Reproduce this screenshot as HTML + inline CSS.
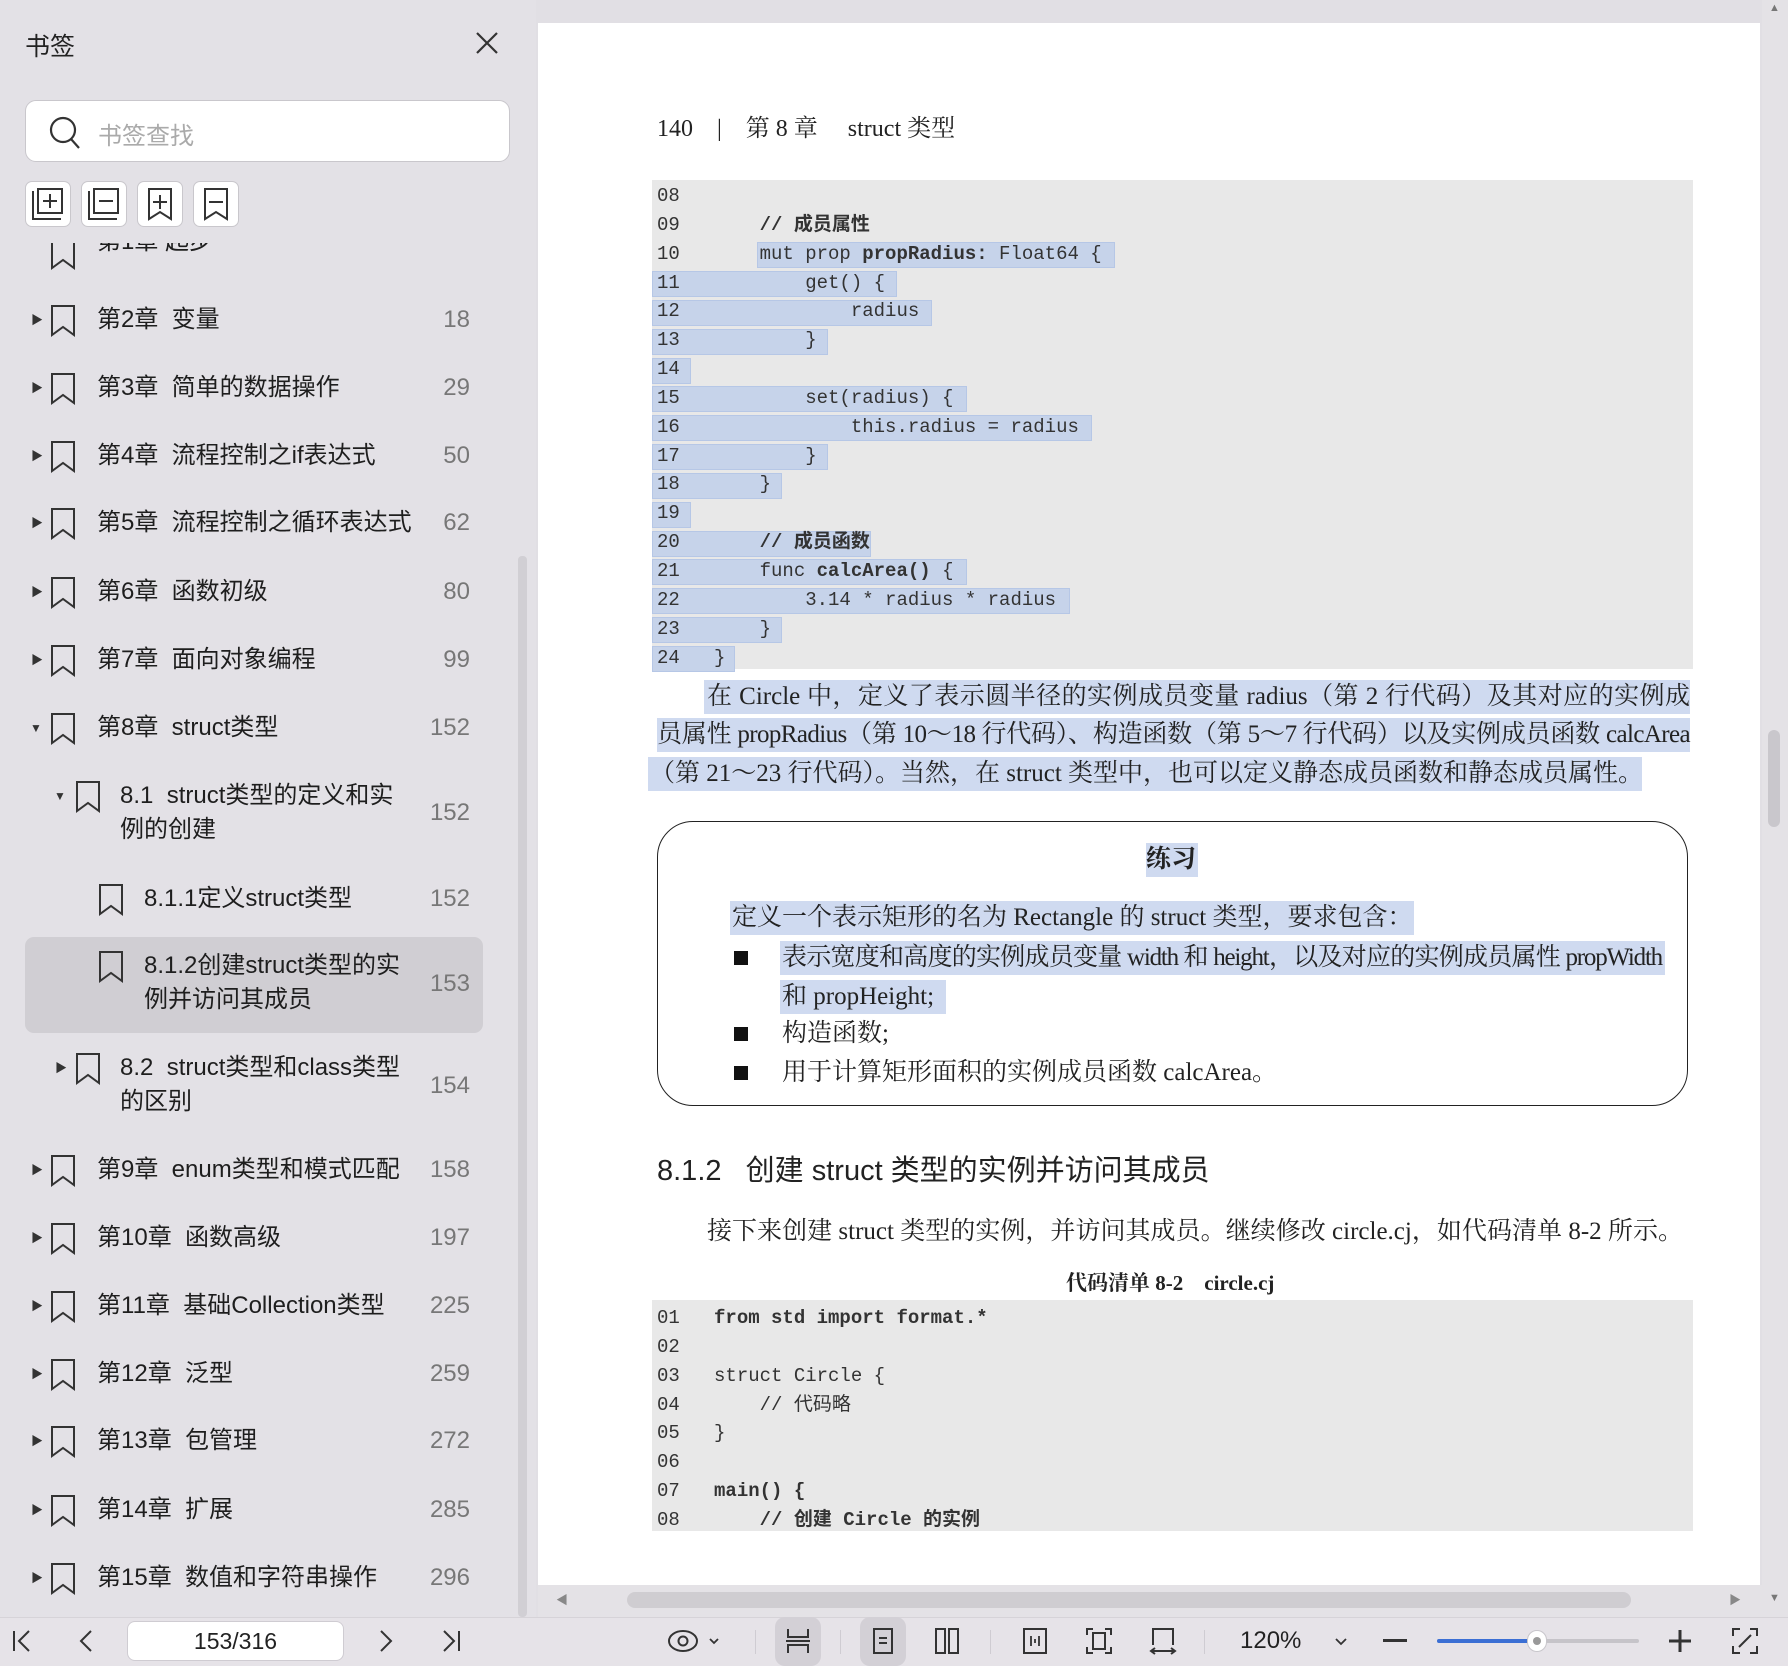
<!DOCTYPE html>
<html><head><meta charset="utf-8"><style>
*{margin:0;padding:0;box-sizing:border-box}
body{width:1788px;height:1666px;position:relative;overflow:hidden;background:#e1dfe4;font-family:"Liberation Sans","Noto Sans CJK SC",sans-serif;color:#222}
.a{position:absolute}
.side{left:0;top:0;width:536px;height:1617px;background:#e3e1e6}
.rowt{position:absolute;font-size:24px;color:#1e1e1e;line-height:34px;white-space:nowrap}
.num{position:absolute;right:1318px;font-size:24px;color:#777;line-height:32px;text-align:right}
.tri{position:absolute;font-size:12px;color:#333;line-height:32px}
.bm{position:absolute;width:26px;height:34px}
.page{left:538px;top:23px;width:1222px;height:1562px;background:#fff}
.serif{font-family:"Liberation Serif","Noto Serif CJK SC",serif}
.code{background:#e8e8e8}
.cl{position:absolute;font-family:"Liberation Mono","Noto Sans CJK SC",monospace;font-size:19px;line-height:28px;white-space:pre;color:#333}
.hl{position:absolute;background:#c6d3ea;border:1px solid #b6c7e6;height:26px}
.pl{position:absolute;font-size:25px;line-height:34px;white-space:nowrap;text-align:justify;text-align-last:justify;color:#222}
.ph{position:absolute;background:#cfdaf0;height:34px}
.tb{left:0;top:1617px;width:1788px;height:49px;background:#e6e3e8;border-top:1px solid #d6d3d8}
.ic{position:absolute;top:1627px}
.sep{position:absolute;top:1630px;width:1px;height:24px;background:#cfccd2}
</style></head><body>

<!-- sidebar -->
<div class="a side"></div>
<div class="a" style="left:0;top:243px;width:536px;height:1374px;overflow:hidden">
  <div class="a" style="top:-6px;left:0;width:536px;height:40px">
    <svg class="bm" style="left:50px;top:0" viewBox="0 0 26 34"><path d="M2 2H24V31L13 23L2 31Z" fill="none" stroke="#333" stroke-width="2"/></svg>
    <div class="rowt" style="left:97px;top:-12px">第1章 起步</div>
  </div>
</div>
<div class="a" style="left:0;top:0;width:536px;height:243px;background:#e3e1e6"></div>
<div class="a" style="left:25px;top:27px;font-size:25px;color:#222">书签</div>
<svg class="a" style="left:474px;top:30px" width="26" height="26" viewBox="0 0 26 26"><path d="M3 3L23 23M23 3L3 23" stroke="#333" stroke-width="2.2"/></svg>
<div class="a" style="left:25px;top:100px;width:485px;height:62px;background:#fff;border:1px solid #c9c7cc;border-radius:11px"></div>
<svg class="a" style="left:48px;top:115px" width="34" height="36" viewBox="0 0 34 36"><circle cx="15" cy="15" r="12" fill="none" stroke="#333" stroke-width="2.2"/><path d="M23 24L31 33" stroke="#333" stroke-width="2.2"/></svg>
<div class="a" style="left:98px;top:116px;font-size:24px;color:#aaa">书签查找</div>
<div class="a" style="left:25px;top:181px;width:46px;height:46px;background:#fff;border:1px solid #c9c7cc;border-radius:7px"></div>
<div class="a" style="left:81px;top:181px;width:46px;height:46px;background:#fff;border:1px solid #c9c7cc;border-radius:7px"></div>
<div class="a" style="left:137px;top:181px;width:46px;height:46px;background:#fff;border:1px solid #c9c7cc;border-radius:7px"></div>
<div class="a" style="left:193px;top:181px;width:46px;height:46px;background:#fff;border:1px solid #c9c7cc;border-radius:7px"></div>
<svg class="a" style="left:25px;top:181px" width="46" height="46" viewBox="0 0 46 46"><path d="M8 10V38H36" fill="none" stroke="#333" stroke-width="2"/><rect x="13" y="8" width="24" height="24" fill="none" stroke="#333" stroke-width="2"/><path d="M25 13V27M18 20H32" stroke="#333" stroke-width="2"/></svg>
<svg class="a" style="left:81px;top:181px" width="46" height="46" viewBox="0 0 46 46"><path d="M8 10V38H36" fill="none" stroke="#333" stroke-width="2"/><rect x="13" y="8" width="24" height="24" fill="none" stroke="#333" stroke-width="2"/><path d="M18 20H32" stroke="#333" stroke-width="2"/></svg>
<svg class="a" style="left:137px;top:181px" width="46" height="46" viewBox="0 0 46 46"><path d="M12 8H34V38L23 31L12 38Z" fill="none" stroke="#333" stroke-width="2"/><path d="M23 14V28M16 21H30" stroke="#333" stroke-width="2"/></svg>
<svg class="a" style="left:193px;top:181px" width="46" height="46" viewBox="0 0 46 46"><path d="M12 8H34V38L23 31L12 38Z" fill="none" stroke="#333" stroke-width="2"/><path d="M16 21H30" stroke="#333" stroke-width="2"/></svg>

<div class="a" style="left:25px;top:937px;width:458px;height:96px;background:#d0ced3;border-radius:9px"></div>

<div class="tri" style="left:31px;top:304px">▶</div><svg class="bm" style="left:50px;top:304px" viewBox="0 0 26 34"><path d="M2 2H24V31L13 23L2 31Z" fill="none" stroke="#333" stroke-width="2"/></svg><div class="rowt" style="left:97px;top:303px">第2章&nbsp; 变量</div><div class="num" style="top:304px">18</div>
<div class="tri" style="left:31px;top:372px">▶</div><svg class="bm" style="left:50px;top:372px" viewBox="0 0 26 34"><path d="M2 2H24V31L13 23L2 31Z" fill="none" stroke="#333" stroke-width="2"/></svg><div class="rowt" style="left:97px;top:371px">第3章&nbsp; 简单的数据操作</div><div class="num" style="top:372px">29</div>
<div class="tri" style="left:31px;top:440px">▶</div><svg class="bm" style="left:50px;top:440px" viewBox="0 0 26 34"><path d="M2 2H24V31L13 23L2 31Z" fill="none" stroke="#333" stroke-width="2"/></svg><div class="rowt" style="left:97px;top:439px">第4章&nbsp; 流程控制之if表达式</div><div class="num" style="top:440px">50</div>
<div class="tri" style="left:31px;top:507px">▶</div><svg class="bm" style="left:50px;top:507px" viewBox="0 0 26 34"><path d="M2 2H24V31L13 23L2 31Z" fill="none" stroke="#333" stroke-width="2"/></svg><div class="rowt" style="left:97px;top:506px">第5章&nbsp; 流程控制之循环表达式</div><div class="num" style="top:507px">62</div>
<div class="tri" style="left:31px;top:576px">▶</div><svg class="bm" style="left:50px;top:576px" viewBox="0 0 26 34"><path d="M2 2H24V31L13 23L2 31Z" fill="none" stroke="#333" stroke-width="2"/></svg><div class="rowt" style="left:97px;top:575px">第6章&nbsp; 函数初级</div><div class="num" style="top:576px">80</div>
<div class="tri" style="left:31px;top:644px">▶</div><svg class="bm" style="left:50px;top:644px" viewBox="0 0 26 34"><path d="M2 2H24V31L13 23L2 31Z" fill="none" stroke="#333" stroke-width="2"/></svg><div class="rowt" style="left:97px;top:643px">第7章&nbsp; 面向对象编程</div><div class="num" style="top:644px">99</div>
<div class="tri" style="left:30px;top:712px">▼</div><svg class="bm" style="left:50px;top:712px" viewBox="0 0 26 34"><path d="M2 2H24V31L13 23L2 31Z" fill="none" stroke="#333" stroke-width="2"/></svg><div class="rowt" style="left:97px;top:711px">第8章&nbsp; struct类型</div><div class="num" style="top:712px">152</div>
<div class="tri" style="left:54px;top:780px">▼</div><svg class="bm" style="left:75px;top:780px" viewBox="0 0 26 34"><path d="M2 2H24V31L13 23L2 31Z" fill="none" stroke="#333" stroke-width="2"/></svg><div class="rowt" style="left:120px;top:779px">8.1&nbsp; struct类型的定义和实<br>例的创建</div><div class="num" style="top:797px">152</div>
<svg class="bm" style="left:98px;top:883px" viewBox="0 0 26 34"><path d="M2 2H24V31L13 23L2 31Z" fill="none" stroke="#333" stroke-width="2"/></svg><div class="rowt" style="left:144px;top:882px">8.1.1定义struct类型</div><div class="num" style="top:883px">152</div>
<svg class="bm" style="left:98px;top:950px" viewBox="0 0 26 34"><path d="M2 2H24V31L13 23L2 31Z" fill="none" stroke="#333" stroke-width="2"/></svg><div class="rowt" style="left:144px;top:949px">8.1.2创建struct类型的实<br>例并访问其成员</div><div class="num" style="top:968px">153</div>
<div class="tri" style="left:55px;top:1052px">▶</div><svg class="bm" style="left:75px;top:1052px" viewBox="0 0 26 34"><path d="M2 2H24V31L13 23L2 31Z" fill="none" stroke="#333" stroke-width="2"/></svg><div class="rowt" style="left:120px;top:1051px">8.2&nbsp; struct类型和class类型<br>的区别</div><div class="num" style="top:1070px">154</div>
<div class="tri" style="left:31px;top:1154px">▶</div><svg class="bm" style="left:50px;top:1154px" viewBox="0 0 26 34"><path d="M2 2H24V31L13 23L2 31Z" fill="none" stroke="#333" stroke-width="2"/></svg><div class="rowt" style="left:97px;top:1153px">第9章&nbsp; enum类型和模式匹配</div><div class="num" style="top:1154px">158</div>
<div class="tri" style="left:31px;top:1222px">▶</div><svg class="bm" style="left:50px;top:1222px" viewBox="0 0 26 34"><path d="M2 2H24V31L13 23L2 31Z" fill="none" stroke="#333" stroke-width="2"/></svg><div class="rowt" style="left:97px;top:1221px">第10章&nbsp; 函数高级</div><div class="num" style="top:1222px">197</div>
<div class="tri" style="left:31px;top:1290px">▶</div><svg class="bm" style="left:50px;top:1290px" viewBox="0 0 26 34"><path d="M2 2H24V31L13 23L2 31Z" fill="none" stroke="#333" stroke-width="2"/></svg><div class="rowt" style="left:97px;top:1289px">第11章&nbsp; 基础Collection类型</div><div class="num" style="top:1290px">225</div>
<div class="tri" style="left:31px;top:1358px">▶</div><svg class="bm" style="left:50px;top:1358px" viewBox="0 0 26 34"><path d="M2 2H24V31L13 23L2 31Z" fill="none" stroke="#333" stroke-width="2"/></svg><div class="rowt" style="left:97px;top:1357px">第12章&nbsp; 泛型</div><div class="num" style="top:1358px">259</div>
<div class="tri" style="left:31px;top:1425px">▶</div><svg class="bm" style="left:50px;top:1425px" viewBox="0 0 26 34"><path d="M2 2H24V31L13 23L2 31Z" fill="none" stroke="#333" stroke-width="2"/></svg><div class="rowt" style="left:97px;top:1424px">第13章&nbsp; 包管理</div><div class="num" style="top:1425px">272</div>
<div class="tri" style="left:31px;top:1494px">▶</div><svg class="bm" style="left:50px;top:1494px" viewBox="0 0 26 34"><path d="M2 2H24V31L13 23L2 31Z" fill="none" stroke="#333" stroke-width="2"/></svg><div class="rowt" style="left:97px;top:1493px">第14章&nbsp; 扩展</div><div class="num" style="top:1494px">285</div>
<div class="tri" style="left:31px;top:1562px">▶</div><svg class="bm" style="left:50px;top:1562px" viewBox="0 0 26 34"><path d="M2 2H24V31L13 23L2 31Z" fill="none" stroke="#333" stroke-width="2"/></svg><div class="rowt" style="left:97px;top:1561px">第15章&nbsp; 数值和字符串操作</div><div class="num" style="top:1562px">296</div>
<div class="a" style="left:518px;top:556px;width:9px;height:1061px;background:#d1cfd4;border-radius:4px"></div>

<!-- page -->
<div class="a page"></div>
<div class="a serif" style="left:657px;top:108px;font-size:24px;color:#222;white-space:pre">140    |    第 8 章     struct 类型</div>

<div class="a code" style="left:652px;top:180px;width:1041px;height:489px"></div>
<div class="hl" style="left:757px;top:242px;width:358px"></div>
<div class="hl" style="left:652px;top:271px;width:245px"></div>
<div class="hl" style="left:652px;top:300px;width:280px"></div>
<div class="hl" style="left:652px;top:329px;width:176px"></div>
<div class="hl" style="left:652px;top:358px;width:39px"></div>
<div class="hl" style="left:652px;top:386px;width:315px"></div>
<div class="hl" style="left:652px;top:415px;width:440px"></div>
<div class="hl" style="left:652px;top:444px;width:176px"></div>
<div class="hl" style="left:652px;top:473px;width:130px"></div>
<div class="hl" style="left:652px;top:502px;width:39px"></div>
<div class="hl" style="left:652px;top:531px;width:219px"></div>
<div class="hl" style="left:652px;top:559px;width:315px"></div>
<div class="hl" style="left:652px;top:588px;width:418px"></div>
<div class="hl" style="left:652px;top:617px;width:130px"></div>
<div class="hl" style="left:652px;top:646px;width:83px"></div>
<div class="cl" style="left:657px;top:182px;line-height:28.85px">08
09       <b>// 成员属性</b>
10       mut prop <b>propRadius:</b> Float64 {
11           get() {
12               radius
13           }
14
15           set(radius) {
16               this.radius = radius
17           }
18       }
19
20       <b>// 成员函数</b>
21       func <b>calcArea()</b> {
22           3.14 * radius * radius
23       }
24   }</div>

<div class="ph" style="left:704px;top:680px;width:986px"></div>
<div class="ph" style="left:657px;top:718px;width:1033px"></div>
<div class="ph" style="left:648px;top:757px;width:994px"></div>
<div class="pl serif" style="left:707px;top:680px;width:983px">在 Circle 中，定义了表示圆半径的实例成员变量 radius（第 2 行代码）及其对应的实例成</div>
<div class="pl serif" style="left:657px;top:718px;width:1033px;letter-spacing:-0.6px">员属性 propRadius（第 10～18 行代码）、构造函数（第 5～7 行代码）以及实例成员函数 calcArea</div>
<div class="pl serif" style="left:650px;top:757px;width:982px">（第 21～23 行代码）。当然，在 struct 类型中，也可以定义静态成员函数和静态成员属性。</div>

<div class="a" style="left:657px;top:821px;width:1031px;height:285px;border:1.5px solid #222;border-radius:36px"></div>
<div class="ph" style="left:1146px;top:843px;width:52px"></div>
<div class="a serif" style="left:1146px;top:843px;font-size:25px;line-height:34px;font-weight:bold">练习</div>
<div class="ph" style="left:730px;top:901px;width:684px"></div>
<div class="pl serif" style="left:732px;top:901px;text-align:left;text-align-last:auto">定义一个表示矩形的名为 Rectangle 的 struct 类型，要求包含：</div>
<div class="ph" style="left:780px;top:941px;width:885px"></div>
<div class="ph" style="left:780px;top:980px;width:166px"></div>
<div class="a" style="left:734px;top:951px;width:14px;height:14px;background:#111"></div>
<div class="pl serif" style="left:782px;top:941px;width:880px;letter-spacing:-1.2px">表示宽度和高度的实例成员变量 width 和 height，以及对应的实例成员属性 propWidth</div>
<div class="pl serif" style="left:782px;top:980px;text-align:left;text-align-last:auto">和 propHeight;</div>
<div class="a" style="left:734px;top:1027px;width:14px;height:14px;background:#111"></div>
<div class="pl serif" style="left:782px;top:1017px;text-align:left;text-align-last:auto">构造函数;</div>
<div class="a" style="left:734px;top:1066px;width:14px;height:14px;background:#111"></div>
<div class="pl serif" style="left:782px;top:1056px;text-align:left;text-align-last:auto">用于计算矩形面积的实例成员函数 calcArea。</div>

<div class="a" style="left:657px;top:1152px;font-size:29px;line-height:38px;white-space:nowrap;color:#222">8.1.2&nbsp;&nbsp; 创建 struct 类型的实例并访问其成员</div>
<div class="pl serif" style="left:707px;top:1215px;width:976px">接下来创建 struct 类型的实例，并访问其成员。继续修改 circle.cj，如代码清单 8-2 所示。</div>
<div class="a serif" style="left:1066px;top:1269px;font-size:21px;line-height:28px;font-weight:bold;white-space:pre">代码清单 8-2    circle.cj</div>

<div class="a code" style="left:652px;top:1300px;width:1041px;height:231px"></div>
<div class="cl" style="left:657px;top:1304px;line-height:28.85px">01   <b>from std import format.*</b>
02
03   struct Circle {
04       // 代码略
05   }
06
07   <b>main() {</b>
08       <b>// 创建 Circle 的实例</b></div>

<div class="a" style="left:1762px;top:0;width:26px;height:1617px;background:#e4e2e6"></div>
<div class="a" style="left:1768px;top:730px;width:12px;height:97px;background:#c9c7cc;border-radius:6px"></div>
<div class="a" style="left:1769px;top:2px;font-size:11px;color:#777">▲</div>
<div class="a" style="left:1769px;top:1592px;font-size:11px;color:#777">▼</div>
<div class="a" style="left:538px;top:1585px;width:1224px;height:32px;background:#e4e2e6"></div>
<div class="a" style="left:627px;top:1592px;width:1004px;height:16px;background:#cfcdd1;border-radius:8px"></div>
<div class="a" style="left:556px;top:1591px;font-size:12px;color:#888">◀</div>
<div class="a" style="left:1729px;top:1591px;font-size:12px;color:#888">▶</div>

<div class="a tb"></div>
<svg class="ic" style="left:10px" width="24" height="28" viewBox="0 0 24 28"><path d="M4 4V24M19 4L9 14L19 24" fill="none" stroke="#333" stroke-width="2"/></svg>
<svg class="ic" style="left:76px" width="20" height="28" viewBox="0 0 20 28"><path d="M15 4L5 14L15 24" fill="none" stroke="#333" stroke-width="2"/></svg>
<div class="a" style="left:127px;top:1621px;width:217px;height:40px;background:#fff;border:1px solid #cfccd2;border-radius:8px;text-align:center;font-size:23px;line-height:38px;color:#222">153/316</div>
<svg class="ic" style="left:376px" width="20" height="28" viewBox="0 0 20 28"><path d="M5 4L15 14L5 24" fill="none" stroke="#333" stroke-width="2"/></svg>
<svg class="ic" style="left:439px" width="24" height="28" viewBox="0 0 24 28"><path d="M20 4V24M5 4L15 14L5 24" fill="none" stroke="#333" stroke-width="2"/></svg>
<svg class="ic" style="left:667px" width="60" height="28" viewBox="0 0 60 28"><ellipse cx="16" cy="14" rx="14" ry="10" fill="none" stroke="#333" stroke-width="2"/><circle cx="16" cy="14" r="4.5" fill="none" stroke="#333" stroke-width="2"/><path d="M43 12L47 16L51 12" fill="none" stroke="#333" stroke-width="1.8"/></svg>
<div class="sep" style="left:755px"></div>
<div class="a" style="left:775px;top:1617px;width:46px;height:49px;background:#d3d0d6;border-radius:10px"></div>
<svg class="ic" style="left:785px" width="26" height="28" viewBox="0 0 26 28"><path d="M3 2V10H23V2M3 26V18H23V26M1 14H25" fill="none" stroke="#333" stroke-width="2"/></svg>
<div class="sep" style="left:840px"></div>
<div class="a" style="left:860px;top:1617px;width:46px;height:49px;background:#d3d0d6;border-radius:10px"></div>
<svg class="ic" style="left:871px" width="24" height="28" viewBox="0 0 24 28"><rect x="3" y="2" width="18" height="24" fill="none" stroke="#333" stroke-width="2"/><path d="M8 11H16M8 16H16" stroke="#333" stroke-width="2"/></svg>
<svg class="ic" style="left:934px" width="26" height="28" viewBox="0 0 26 28"><rect x="2" y="2" width="9" height="24" fill="none" stroke="#333" stroke-width="2"/><rect x="15" y="2" width="9" height="24" fill="none" stroke="#333" stroke-width="2"/></svg>
<div class="sep" style="left:990px"></div>
<svg class="ic" style="left:1022px" width="26" height="28" viewBox="0 0 26 28"><rect x="2" y="2" width="22" height="24" fill="none" stroke="#333" stroke-width="2"/><path d="M9 9V19M17 9V19M13 12V16" stroke="#333" stroke-width="1.8"/></svg>
<svg class="ic" style="left:1085px" width="28" height="28" viewBox="0 0 28 28"><path d="M2 8V2H8M20 2H26V8M26 20V26H20M8 26H2V20" fill="none" stroke="#333" stroke-width="2"/><rect x="8" y="6" width="12" height="16" fill="none" stroke="#333" stroke-width="2"/></svg>
<svg class="ic" style="left:1149px" width="28" height="28" viewBox="0 0 28 28"><path d="M4 18V2H24V18M2 24H26M6 21L2 24L6 27M22 21L26 24L22 27" fill="none" stroke="#333" stroke-width="2"/></svg>
<div class="sep" style="left:1204px"></div>
<div class="a" style="left:1240px;top:1625px;font-size:24px;line-height:32px;color:#222">120%</div>
<svg class="ic" style="left:1334px" width="14" height="28" viewBox="0 0 14 28"><path d="M2 12L7 17L12 12" fill="none" stroke="#333" stroke-width="1.8"/></svg>
<div class="a" style="left:1383px;top:1639px;width:24px;height:3px;background:#333"></div>
<div class="a" style="left:1437px;top:1639px;width:202px;height:4px;background:#c6c4c9;border-radius:2px"></div>
<div class="a" style="left:1437px;top:1639px;width:100px;height:4px;background:#3b6fd4;border-radius:2px"></div>
<div class="a" style="left:1527px;top:1630px;width:20px;height:22px;background:#fff;border:1px solid #c8c6cb;border-radius:10px"></div>
<div class="a" style="left:1533px;top:1637px;width:8px;height:8px;background:#999;border-radius:4px"></div>
<svg class="ic" style="left:1668px" width="24" height="28" viewBox="0 0 24 28"><path d="M12 3V25M1 14H23" stroke="#333" stroke-width="3"/></svg>
<svg class="ic" style="left:1731px" width="28" height="28" viewBox="0 0 28 28"><path d="M2 9V2H9M19 2H26V9M26 19V26H19M9 26H2V19M8 20L20 8" fill="none" stroke="#333" stroke-width="2"/></svg>
</body></html>
